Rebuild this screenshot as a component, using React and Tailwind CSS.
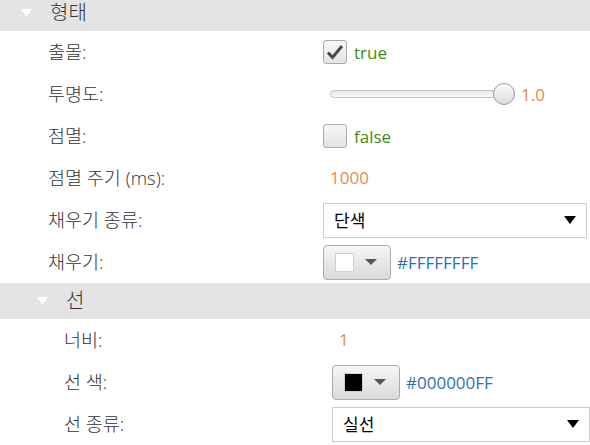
import React from 'react';

const font = "font-['Open_Sans','Noto_Sans_CJK_KR',sans-serif]";

const HeaderTriangle = () => (
  <svg width="11" height="8" viewBox="0 0 11 8" className="shrink-0">
    <path d="M0 0 L11 0 L5.5 8 Z" fill="#ffffff" />
  </svg>
);

const SectionHeader = ({ title, indent, clip }) => (
  <div
    className={`flex items-center h-[36px] bg-[#e4e4e4] ${clip ? '-mt-[5px]' : ''} ${indent}`}
  >
    <HeaderTriangle />
    <span className="ml-[18px] text-[20px] font-light text-[#333333] leading-none">{title}</span>
  </div>
);

const Row = ({ label, labelW, children }) => (
  <div className="flex items-center h-[42px]">
    <div className={`${labelW} shrink-0 text-[18.5px] font-light text-[#333333] leading-none`}>{label}</div>
    <div className="flex-1 flex items-center min-w-0">{children}</div>
  </div>
);

const Checkbox = ({ checked, text }) => (
  <div className="flex items-center">
    <div className="w-[24px] h-[24px] rounded-[3px] border border-[#a9a9a9] bg-gradient-to-b from-[#f7f7f7] to-[#e3e3e3] flex items-center justify-center">
      {checked && (
        <svg width="18" height="16" viewBox="0 0 18 16">
          <path d="M2 8.5 L6.5 13.5 L16 2" fill="none" stroke="#4a4a4a" strokeWidth="3" />
        </svg>
      )}
    </div>
    <span className="ml-[7px] text-[17px] text-[#3f8a14] leading-none">{text}</span>
  </div>
);

const Slider = () => (
  <div className="flex items-center">
    <div className="relative w-[185px] h-[24px] flex items-center ml-[7px]">
      <div className="w-full h-[8px] rounded-full border border-[#c4c4c4] bg-gradient-to-b from-[#e8e8e8] to-[#fafafa]" />
      <div className="absolute right-0 top-[1px] w-[22px] h-[22px] rounded-full border border-[#9a9a9a] bg-gradient-to-b from-[#fbfbfb] to-[#dcdcdc]" />
    </div>
    <span className="ml-[6px] text-[17px] text-[#e88a4e] leading-none">1.0</span>
  </div>
);

const Select = ({ value }) => (
  <div className="flex items-center justify-between w-full h-[35px] border border-[#cccccc] bg-white pl-[10px] pr-[10px]">
    <span className="text-[17px] text-black leading-none">{value}</span>
    <svg width="12" height="8" viewBox="0 0 12 8">
      <path d="M0 0 L12 0 L6 8 Z" fill="#000000" />
    </svg>
  </div>
);

const ColorPicker = ({ color, hex }) => (
  <div className="flex items-center">
    <div className="flex items-center w-[68px] h-[35px] rounded-[4px] border border-[#ababab] bg-gradient-to-b from-[#f6f6f6] to-[#dadada] pl-[11px]">
      <div className="w-[19px] h-[19px] border border-[#d0d0d0]" style={{ backgroundColor: color }} />
      <svg width="12" height="6" viewBox="0 0 12 6" className="ml-[11px]">
        <path d="M0 0 L12 0 L6 6 Z" fill="#555555" />
      </svg>
    </div>
    <span className="ml-[6px] text-[17px] text-[#2a73b5] leading-none">{hex}</span>
  </div>
);

const Value = ({ children }) => (
  <span className="text-[17px] text-[#e88a4e] leading-none">{children}</span>
);

export default function App() {
  return (
    <div className={`w-[590px] h-[445px] overflow-hidden bg-white ${font}`}>
      <SectionHeader title="형태" indent="pl-[21px]" clip />
      <div className="pl-[48px] pr-[3px]">
        <Row label="출몰:" labelW="w-[275px]">
          <Checkbox checked text="true" />
        </Row>
        <Row label="투명도:" labelW="w-[275px]">
          <Slider />
        </Row>
        <Row label="점멸:" labelW="w-[275px]">
          <Checkbox text="false" />
        </Row>
        <Row label="점멸 주기 (ms):" labelW="w-[275px]">
          <span className="ml-[7px]"><Value>1000</Value></span>
        </Row>
        <Row label="채우기 종류:" labelW="w-[275px]">
          <Select value="단색" />
        </Row>
        <Row label="채우기:" labelW="w-[275px]">
          <ColorPicker color="#ffffff" hex="#FFFFFFFF" />
        </Row>
      </div>
      <SectionHeader title="선" indent="pl-[37px]" />
      <div className="pl-[64px]">
        <Row label="너비:" labelW="w-[268px]">
          <span className="ml-[7px]"><Value>1</Value></span>
        </Row>
        <Row label="선 색:" labelW="w-[268px]">
          <ColorPicker color="#000000" hex="#000000FF" />
        </Row>
        <Row label="선 종류:" labelW="w-[268px]">
          <Select value="실선" />
        </Row>
      </div>
    </div>
  );
}
